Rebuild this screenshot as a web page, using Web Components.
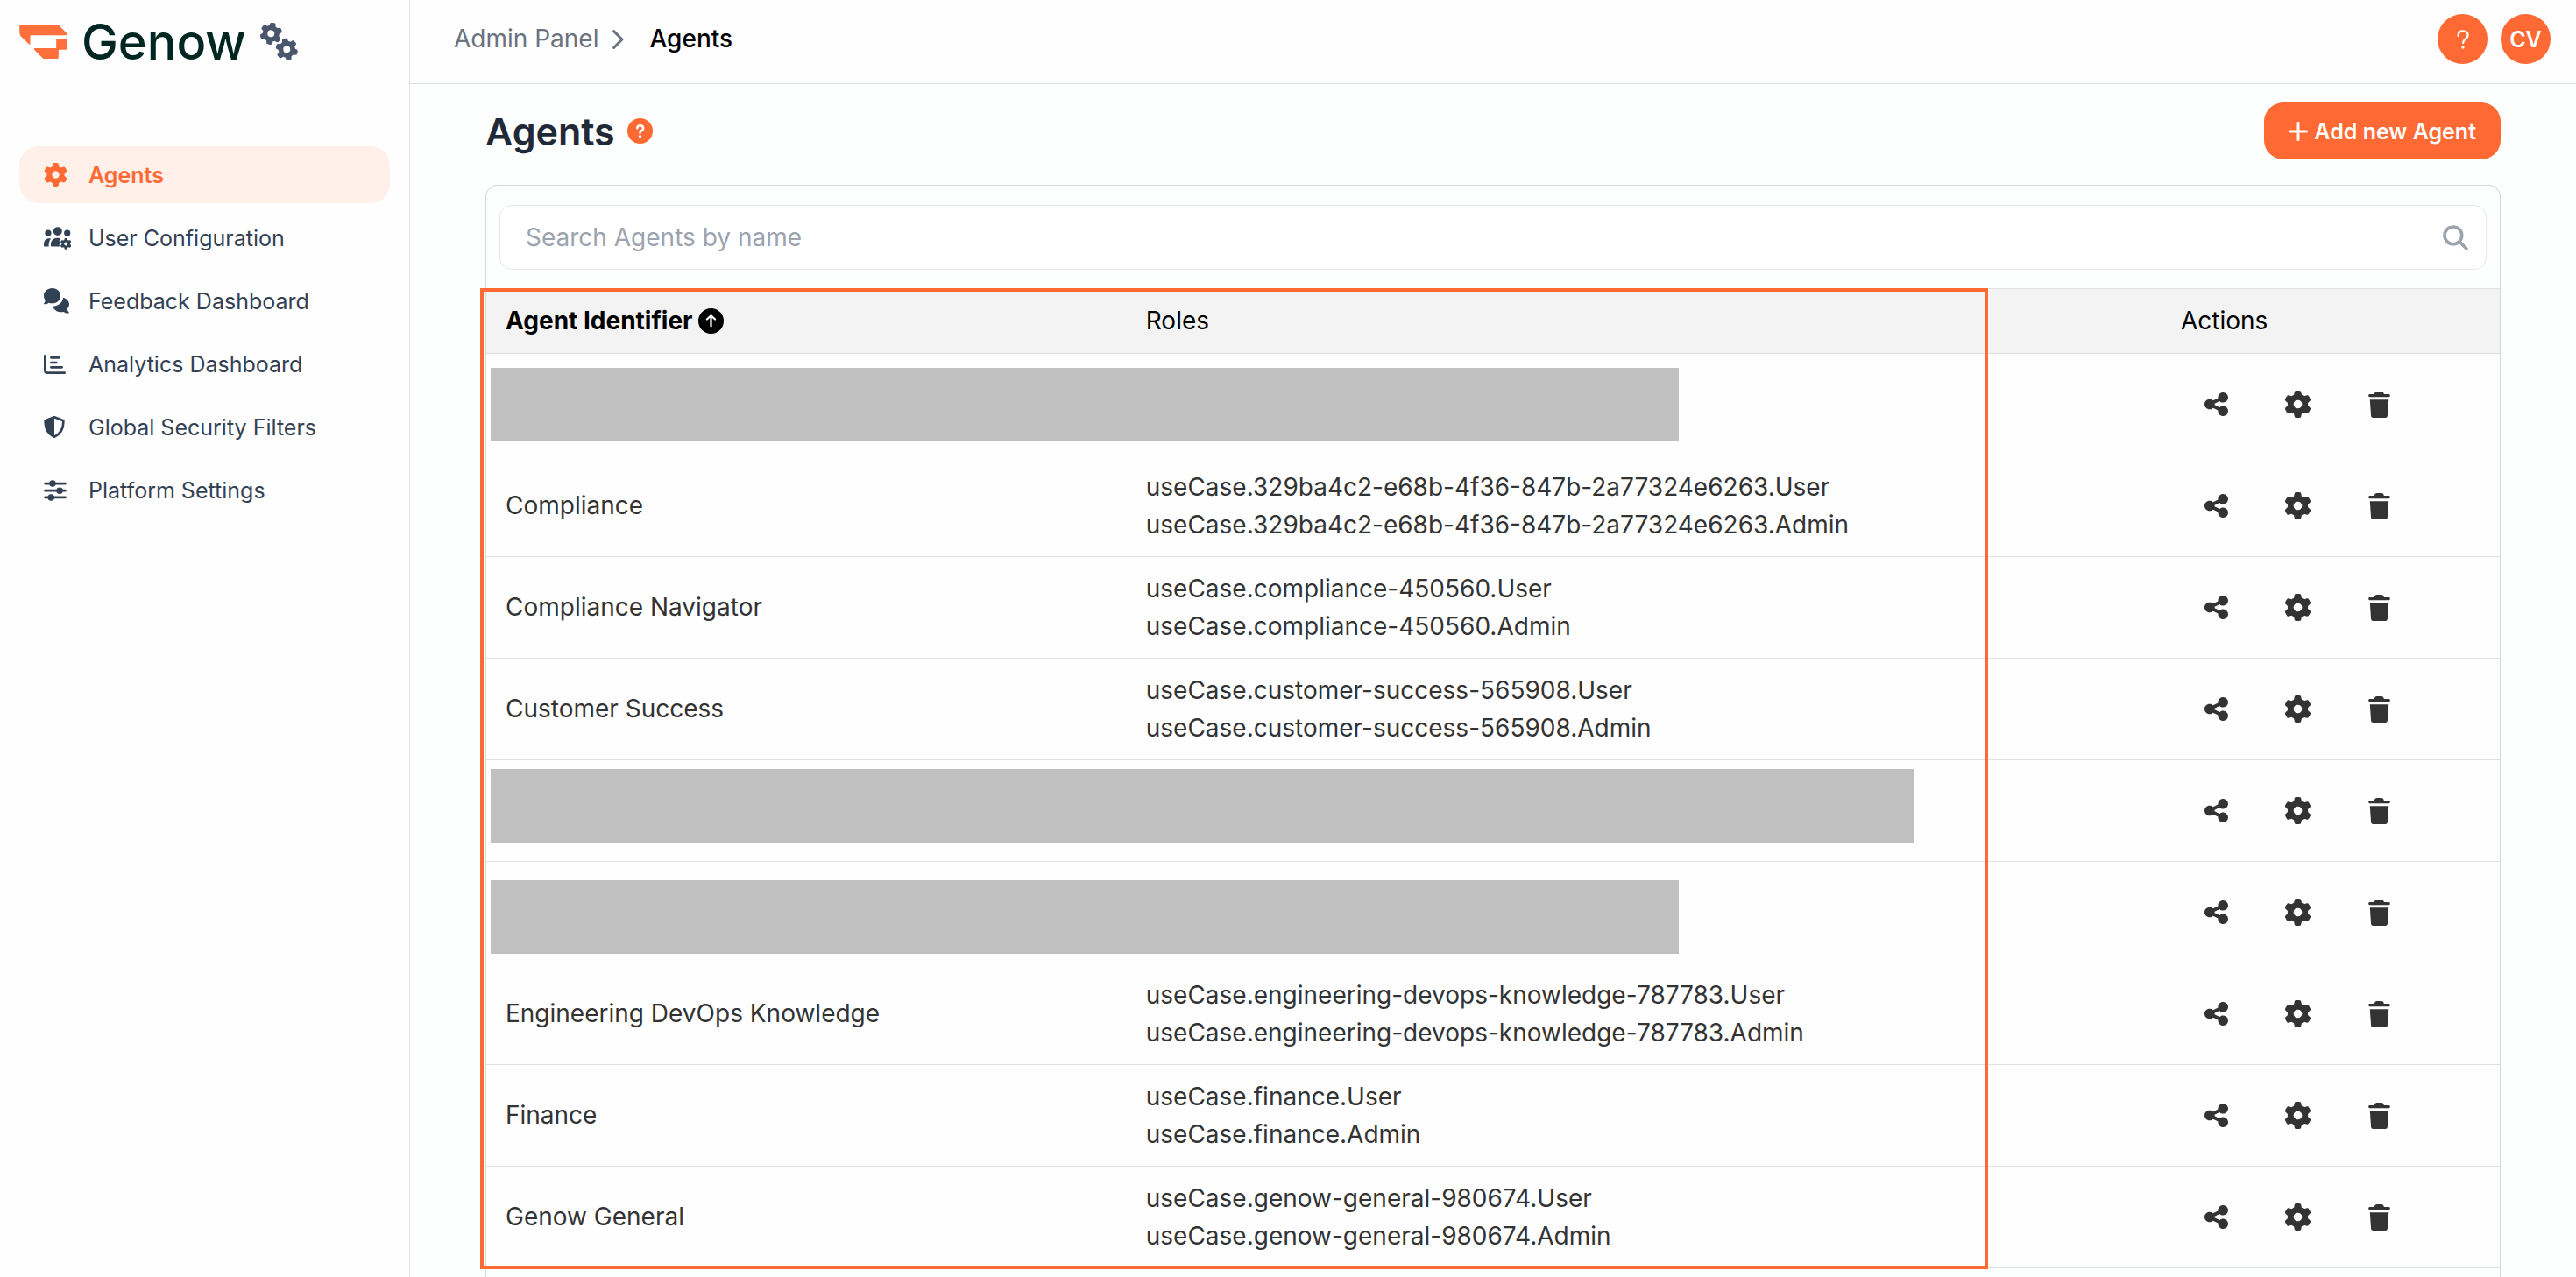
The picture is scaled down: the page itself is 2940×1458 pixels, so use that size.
<!DOCTYPE html>
<html lang="en">
<head>
<meta charset="utf-8">
<title>Agents - Admin Panel</title>
<style>
  body {
    margin: 0;
    font-family: Inter, "Liberation Sans", sans-serif;
    font-size: 28px;
    line-height: 43px;
    color: #333;
    background: #fdfefe;
    --orange: #ff6933;
    --line: #dfe1e1;
  }
</style>
</head>
<body>
<admin-app>
  <side-bar slot="sidebar">
    <nav-item icon="gear" active>Agents</nav-item>
    <nav-item icon="users">User Configuration</nav-item>
    <nav-item icon="comments">Feedback Dashboard</nav-item>
    <nav-item icon="chart">Analytics Dashboard</nav-item>
    <nav-item icon="shield">Global Security Filters</nav-item>
    <nav-item icon="sliders">Platform Settings</nav-item>
  </side-bar>
  <top-bar slot="header" initials="CV">
    <a slot="parent" href="#admin">Admin Panel</a>
    <span slot="current">Agents</span>
  </top-bar>
  <page-heading>
    Agents
    <span slot="action">Add new Agent</span>
  </page-heading>
  <agents-card></agents-card>
</admin-app>

<script>
const GEAR = 'M495.9 166.6c3.2 8.7 .5 18.4-6.4 24.6l-43.3 39.4c1.1 8.3 1.7 16.8 1.7 25.4s-.6 17.1-1.7 25.4l43.3 39.4c6.9 6.2 9.6 15.9 6.4 24.6c-4.4 11.9-9.7 23.3-15.8 34.3l-4.7 8.1c-6.6 11-14 21.4-22.1 31.2c-5.9 7.2-15.7 9.6-24.5 6.8l-55.7-17.7c-13.4 10.3-28.2 18.9-44 25.4l-12.5 57.1c-2 9.1-9 16.3-18.2 17.8c-13.8 2.3-28 3.5-42.5 3.5s-28.7-1.2-42.5-3.5c-9.2-1.5-16.2-8.7-18.2-17.8l-12.5-57.1c-15.8-6.5-30.6-15.1-44-25.4L83.1 425.9c-8.8 2.8-18.6 .3-24.5-6.8c-8.1-9.8-15.5-20.2-22.1-31.2l-4.7-8.1c-6.1-11-11.4-22.4-15.8-34.3c-3.2-8.7-.5-18.4 6.4-24.6l43.3-39.4C64.6 273.1 64 264.6 64 256s.6-17.1 1.7-25.4L22.4 191.2c-6.9-6.2-9.6-15.9-6.4-24.6c4.4-11.9 9.7-23.3 15.8-34.3l4.7-8.1c6.6-11 14-21.4 22.1-31.2c5.9-7.2 15.7-9.6 24.5-6.8l55.7 17.7c13.4-10.3 28.2-18.9 44-25.4l12.5-57.1c2-9.1 9-16.3 18.2-17.8C227.3 1.2 241.5 0 256 0s28.7 1.2 42.5 3.5c9.2 1.5 16.2 8.7 18.2 17.8l12.5 57.1c15.8 6.5 30.6 15.1 44 25.4l55.7-17.7c8.8-2.8 18.6-.3 24.5 6.8c8.1 9.8 15.5 20.2 22.1 31.2l4.7 8.1c6.1 11 11.4 22.4 15.8 34.3zM256 336a80 80 0 1 0 0-160 80 80 0 1 0 0 160z';

// name: [width, height, viewBox, content]
const ICONS = {
  logo: [55, 39, '0 0 165 118', `
    <path d="M5 0H134L165 32V37H41Q37 37 37 41V68H33L4 40Q0 35 0 27V6Q0 0 5 0Z"/>
    <path d="M131 50H160Q165 50 165 55V82Q165 87 160 87H137Q135 87 135 89V113Q135 118 130 118H82L51 87V82H124Q127 82 127 79V54Q127 50 131 50Z"/>`],
  gears: [43, 43, '0 0 129 129', `
    <g transform="rotate(11 37 37)"><path transform="translate(-1 -1) scale(.148)" d="${GEAR}"/></g>
    <g transform="rotate(-12 91 91)"><path transform="translate(53 53) scale(.148)" d="${GEAR}"/></g>`],
  gear: [27, 27, '0 0 512 512', `<path d="${GEAR}"/>`],
  users: [31, 26, '0 0 94 78', `
    <circle cx="15" cy="21" r="11"/><circle cx="48" cy="15" r="15"/><circle cx="81" cy="21" r="11"/>
    <path d="M0 65V60C0 48 8 40 18 40H25C19 47 17 55 17 68H3Q0 68 0 65Z"/>
    <path d="M24 64V62C24 47 34 38 45 38H52Q57 38 57 43L53 48L57 54L53 61L58 68H28Q24 68 24 64Z"/>
    <path transform="translate(57 39) scale(.076)" d="${GEAR}"/>`],
  comments: [29, 29, '0 0 87 87', `
    <path d="M66 32C80 36 87 45 87 55C87 61 84 67 80 71C81 76 83 79 86 82Q87 86 83 86C77 86 72 84 68 81C52 84 36 78 31 62C49 60 65 50 66 32Z"/>
    <path d="M29 0C45 0 57 11 57 26C57 41 45 52 29 52C24 52 20 51 17 50C13 53 8 55 3 55Q-1 55 1 51C3 49 5 45 5 41C2 37 0 32 0 26C0 11 13 0 29 0Z"/>`],
  chart: [25, 22, '0 0 75 66', `
    <g fill="none" stroke="currentColor" stroke-width="8" stroke-linecap="round">
      <path d="M4 4V54Q4 62 12 62H71M25 10H52M25 27H43M25 43H62"/></g>`],
  shield: [24, 25, '0 0 72 75', `
    <path fill="none" stroke="currentColor" stroke-width="8" stroke-linejoin="round" d="M36 4L67 16C68 42 58 61 36 71C14 61 4 42 5 16Z"/>
    <path d="M36 4V71C14 61 4 42 5 16Z"/>`],
  sliders: [26, 24, '0 0 76 71', `
    <path fill="none" stroke="currentColor" stroke-width="8" stroke-linecap="round" d="M4 12H72M4 36H72M4 59H72"/>
    <circle cx="29" cy="12" r="11"/><circle cx="53" cy="36" r="11"/><circle cx="24" cy="59" r="11"/>`],
  chevron: [13, 22, '0 0 39 66', `
    <path fill="none" stroke="currentColor" stroke-width="9" stroke-linecap="round" stroke-linejoin="round" d="M5 5L33 33L5 61"/>`],
  question: [14, 22, '0 0 42 66', `
    <path fill="none" stroke="currentColor" stroke-width="7" stroke-linecap="round" d="M5 21V18C5 9 12 4 21 4C31 4 38 10 38 18C38 31 21 31 21 45"/>
    <circle cx="21" cy="60" r="5"/>`],
  help: [29, 29, '0 0 88 88', `
    <circle cx="44" cy="44" r="44"/>
    <path fill="none" stroke="#fff" stroke-width="8" stroke-linecap="round" d="M34 34C34 22 55 22 55 35C55 43 44 43 44 51"/>
    <circle cx="44" cy="63" r="5" fill="#fff"/>`],
  plus: [22, 22, '0 0 66 66', `
    <path fill="none" stroke="currentColor" stroke-width="9" stroke-linecap="round" d="M33 4V62M4 33H62"/>`],
  search: [29, 29, '0 0 88 88', `
    <g fill="none" stroke="currentColor" stroke-width="11" stroke-linecap="round">
      <circle cx="36" cy="36" r="30"/><path d="M60 60L82 82"/></g>`],
  sort: [29, 29, '0 0 88 88', `
    <circle cx="44" cy="44" r="44"/>
    <path fill="none" stroke="#fff" stroke-width="7" stroke-linecap="round" stroke-linejoin="round" d="M44 62V26M30 38L44 25L58 38"/>`],
  share: [27, 31, '0 0 448 512', `
    <path d="M352 224c53 0 96-43 96-96s-43-96-96-96s-96 43-96 96c0 4 .2 8 .7 11.9l-94.1 47C145.4 170.2 121.9 160 96 160c-53 0-96 43-96 96s43 96 96 96c25.9 0 49.4-10.2 66.6-26.9l94.1 47c-.5 3.9-.7 7.8-.7 11.9c0 53 43 96 96 96s96-43 96-96s-43-96-96-96c-25.9 0-49.4 10.2-66.6 26.9l-94.1-47c.5-3.9 .7-7.8 .7-11.9s-.2-8-.7-11.9l94.1-47C302.6 213.8 326.1 224 352 224z"/>`],
  settings: [31, 31, '0 0 512 512', `<path d="${GEAR}"/>`],
  trash: [25, 30, '0 0 75 91', `
    <path d="M4 9H20Q22 0 28 0H46Q52 0 54 9H71Q75 9 75 14Q75 19 71 19H4Q0 19 0 14Q0 9 4 9Z"/>
    <path d="M5 28H70L66 85Q65 91 59 91H16Q10 91 9 85Z"/>`]
};

class UiIcon extends HTMLElement {
  constructor() {
    super();
    this.attachShadow({ mode: 'open' });
  }

  connectedCallback() {
    const [w, h, box, content] = ICONS[this.getAttribute('name')];
    this.shadowRoot.innerHTML = `
      <style>
        :host { display: inline-flex; flex: none; }
        svg { display: block; fill: currentColor; }
      </style>
      <svg width="${w}" height="${h}" viewBox="${box}" aria-hidden="true">${content}</svg>
    `;
  }
}

class AdminApp extends HTMLElement {
  constructor() {
    super();
    this.attachShadow({ mode: 'open' });
    this.shadowRoot.innerHTML = `
      <style>
        :host {
          display: grid;
          grid-template-columns: 468px 1fr;
          height: 100vh;
          overflow: hidden;
        }
        .content {
          display: flex;
          flex-direction: column;
          min-width: 0;
          min-height: 0;
        }
        main {
          flex: 1;
          display: flex;
          flex-direction: column;
          gap: 29px;
          min-height: 0;
          padding: 21px 86px 0;
        }
      </style>
      <slot name="sidebar"></slot>
      <div class="content">
        <slot name="header"></slot>
        <main><slot></slot></main>
      </div>
    `;
  }
}

class SideBar extends HTMLElement {
  constructor() {
    super();
    this.attachShadow({ mode: 'open' });
    this.shadowRoot.innerHTML = `
      <style>
        :host {
          display: block;
          box-sizing: border-box;
          padding: 0 22px;
          border-right: 1px solid var(--line);
          background: #fefefe;
        }
        .brand {
          display: flex;
          align-items: center;
          height: 95px;
          margin-bottom: 72px;
          color: #022723;
          text-decoration: none;
        }
        .mark { color: #ff6f3c; }
        .name {
          margin: 0 16px;
          font-size: 56px;
          line-height: 64px;
          font-weight: 500;
        }
        .gears { color: #4a566b; }
        nav {
          display: flex;
          flex-direction: column;
          gap: 7px;
        }
      </style>
      <a class="brand" href="#home">
        <ui-icon class="mark" name="logo"></ui-icon>
        <span class="name">Genow</span>
        <ui-icon class="gears" name="gears"></ui-icon>
      </a>
      <nav><slot></slot></nav>
    `;
  }
}

class NavItem extends HTMLElement {
  constructor() {
    super();
    this.attachShadow({ mode: 'open' });
  }

  connectedCallback() {
    this.shadowRoot.innerHTML = `
      <style>
        :host { display: block; }
        a {
          display: flex;
          align-items: center;
          gap: 19px;
          height: 65px;
          padding: 0 28px;
          border-radius: 22px;
          font-size: 25px;
          line-height: 36px;
          color: #334155;
          text-decoration: none;
        }
        .icon {
          display: flex;
          width: 32px;
        }
        :host([active]) a {
          background: #fff0ea;
          color: var(--orange);
          font-weight: 600;
        }
      </style>
      <a href="#${this.getAttribute('icon')}">
        <span class="icon"><ui-icon name="${this.getAttribute('icon')}"></ui-icon></span>
        <slot></slot>
      </a>
    `;
  }
}

class TopBar extends HTMLElement {
  constructor() {
    super();
    this.attachShadow({ mode: 'open' });
  }

  connectedCallback() {
    this.shadowRoot.innerHTML = `
      <style>
        :host {
          display: flex;
          align-items: center;
          justify-content: space-between;
          padding: 16px 29px 22px 50px;
          border-bottom: 1px solid var(--line);
          background: #fefefe;
        }
        nav {
          display: flex;
          align-items: center;
          color: #6b7280;
        }
        ui-icon[name="chevron"] { margin: 0 29px 0 16px; }
        ::slotted(a) {
          color: inherit;
          text-decoration: none;
        }
        ::slotted(span) {
          color: #000;
          font-weight: 500;
        }
        .buttons {
          display: flex;
          gap: 15px;
        }
        button {
          display: flex;
          align-items: center;
          justify-content: center;
          width: 57px;
          height: 57px;
          padding: 0;
          border: none;
          border-radius: 50%;
          background: var(--orange);
          color: #fff;
          font: 600 25px/36px Inter, sans-serif;
          cursor: pointer;
        }
      </style>
      <nav>
        <slot name="parent"></slot>
        <ui-icon name="chevron"></ui-icon>
        <slot name="current"></slot>
      </nav>
      <div class="buttons">
        <button aria-label="Help"><ui-icon name="question"></ui-icon></button>
        <button>${this.getAttribute('initials')}</button>
      </div>
    `;
  }
}

class PageHeading extends HTMLElement {
  constructor() {
    super();
    this.attachShadow({ mode: 'open' });
    this.shadowRoot.innerHTML = `
      <style>
        :host {
          display: flex;
          align-items: center;
          justify-content: space-between;
        }
        .title {
          display: flex;
          align-items: center;
          gap: 14px;
          color: var(--orange);
        }
        h1 {
          margin: 0;
          font-size: 43px;
          line-height: 58px;
          font-weight: 600;
          color: #1f2937;
        }
        button {
          display: flex;
          align-items: center;
          gap: 7px;
          height: 65px;
          padding: 0 28px;
          border: none;
          border-radius: 22px;
          background: var(--orange);
          color: #fff;
          font: 600 25px/36px Inter, sans-serif;
          cursor: pointer;
        }
      </style>
      <div class="title">
        <h1><slot></slot></h1>
        <ui-icon name="help"></ui-icon>
      </div>
      <button><ui-icon name="plus"></ui-icon><slot name="action"></slot></button>
    `;
  }
}

class AgentsCard extends HTMLElement {
  constructor() {
    super();
    this.attachShadow({ mode: 'open' });

    // masked rows have no name, only a cover bar over both cells
    this.agents = [
      { masked: 'short', align: 'middle' },
      { name: 'Compliance', useCase: '329ba4c2-e68b-4f36-847b-2a77324e6263' },
      { name: 'Compliance Navigator', useCase: 'compliance-450560' },
      { name: 'Customer Success', useCase: 'customer-success-565908' },
      { masked: 'long', align: 'top' },
      { masked: 'short', align: 'bottom' },
      { name: 'Engineering DevOps Knowledge', useCase: 'engineering-devops-knowledge-787783' },
      { name: 'Finance', useCase: 'finance' },
      { name: 'Genow General', useCase: 'genow-general-980674' }
    ];
  }

  connectedCallback() {
    this.render();
  }

  renderCells = (agent) => {
    if (agent.masked) {
      return `<td colspan="2" class="masked ${agent.align}"><div class="bar ${agent.masked}"></div></td>`;
    }
    return `
      <td>${agent.name}</td>
      <td>
        <div>useCase.${agent.useCase}.User</div>
        <div>useCase.${agent.useCase}.Admin</div>
      </td>
    `;
  }

  render = () => {
    this.shadowRoot.innerHTML = `
      <style>
        * {
          box-sizing: border-box;
        }

        :host {
          display: block;
          box-sizing: border-box;
          flex: 1;
          border: 1px solid #d3d8da;
          border-bottom: none;
          border-radius: 14px 14px 0 0;
        }

        .search {
          display: flex;
          align-items: center;
          height: 74px;
          margin: 22px 15px 21px;
          padding: 0 20px 0 29px;
          border: 1px solid #e5e7eb;
          border-radius: 14px;
          background: #fff;
          color: #9ca3af;
        }

        input {
          flex: 1;
          min-width: 0;
          padding: 0;
          border: none;
          outline: none;
          background: none;
          font: inherit;
          color: #333;
        }

        input::placeholder {
          color: #9ca3af;
          opacity: 1;
        }

        .table {
          position: relative;
        }

        table {
          width: 100%;
          table-layout: fixed;
          border-spacing: 0;
          background: #fefefe;
        }

        .col-name { width: 31.8%; }
        .col-actions { width: 16.8%; }

        th {
          height: 75px;
          padding: 0 22px;
          border-top: 1px solid var(--line);
          border-bottom: 1px solid var(--line);
          background: #f3f3f3;
          color: #000;
          font-weight: 400;
          text-align: left;
        }

        .sort {
          display: flex;
          align-items: center;
          gap: 7px;
          padding: 0;
          border: none;
          background: none;
          font: inherit;
          font-weight: 700;
          color: #000;
          cursor: pointer;
        }

        td {
          height: 116px;
          padding: 0 22px;
          border-bottom: 1px solid var(--line);
        }

        .masked { padding: 10px 5px; }
        .top { vertical-align: top; }
        .bottom { vertical-align: bottom; }

        .bar {
          height: 84px;
          background: #c0c0c0;
        }

        .short { width: 71.3%; }
        .long { width: 85.4%; }

        .actions {
          display: flex;
          padding-left: 16px;
        }

        .actions button {
          display: flex;
          align-items: center;
          justify-content: center;
          width: 50px;
          height: 50px;
          margin-right: 43px;
          padding: 0;
          border: none;
          background: none;
          color: #333;
          cursor: pointer;
        }

        /* frame around the identifier and roles columns */
        .highlight {
          position: absolute;
          top: 0;
          bottom: -1px;
          left: -7px;
          right: 25.4%;
          border: 4px solid var(--orange);
          pointer-events: none;
        }
      </style>

      <div class="search">
        <input type="search" placeholder="Search Agents by name" aria-label="Search Agents by name">
        <ui-icon name="search"></ui-icon>
      </div>

      <div class="table">
        <table>
          <colgroup>
            <col class="col-name">
            <col>
            <col class="col-actions">
          </colgroup>
          <thead>
            <tr>
              <th><button class="sort">Agent Identifier <ui-icon name="sort"></ui-icon></button></th>
              <th>Roles</th>
              <th>Actions</th>
            </tr>
          </thead>
          <tbody>
            ${this.agents.map(agent => `
              <tr>
                ${this.renderCells(agent)}
                <td>
                  <div class="actions">
                    <button aria-label="Share"><ui-icon name="share"></ui-icon></button>
                    <button aria-label="Settings"><ui-icon name="settings"></ui-icon></button>
                    <button aria-label="Delete"><ui-icon name="trash"></ui-icon></button>
                  </div>
                </td>
              </tr>
            `).join('')}
          </tbody>
        </table>
        <div class="highlight"></div>
      </div>
    `;
  }
}

customElements.define('ui-icon', UiIcon);
customElements.define('admin-app', AdminApp);
customElements.define('side-bar', SideBar);
customElements.define('nav-item', NavItem);
customElements.define('top-bar', TopBar);
customElements.define('page-heading', PageHeading);
customElements.define('agents-card', AgentsCard);
</script>
</body>
</html>
